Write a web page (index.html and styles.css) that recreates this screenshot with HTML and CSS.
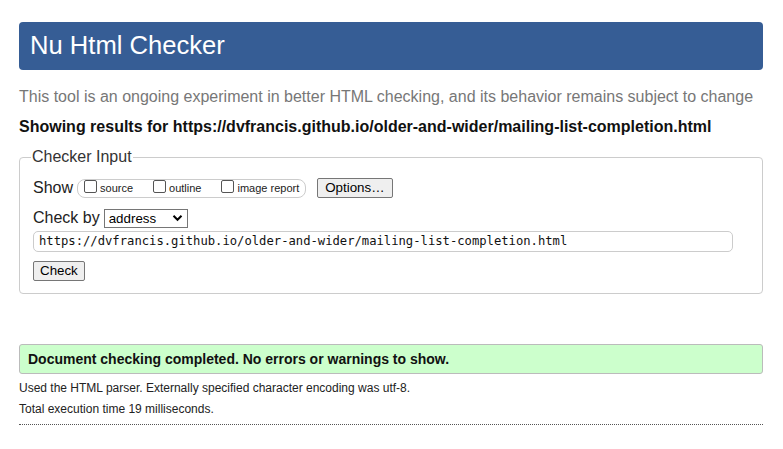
FILE: index.html
```html
<!DOCTYPE html>
<html>
<head>
<meta charset="utf-8">
<link rel="stylesheet" href="styles.css">
</head>
<body>
<h1 class="title">Nu Html Checker</h1>
<p class="intro">This tool is an ongoing experiment in better HTML checking, and its behavior remains subject to change</p>
<p class="results-for">Showing results for https://dvfrancis.github.io/older-and-wider/mailing-list-completion.html</p>
<fieldset class="input-box">
  <legend>Checker Input</legend>
  <div class="row">
    <span class="lbl">Show</span>
    <span class="opts">
      <label class="opt"><span class="cb"></span>source</label>
      <label class="opt"><span class="cb"></span>outline</label>
      <label class="opt last"><span class="cb"></span>image report</label>
    </span>
    <span class="btn options">Options…</span>
  </div>
  <div class="row row2">
    <span class="lbl">Check by</span>
    <span class="select">address<svg width="11" height="8" viewBox="0 0 11 8"><path d="M1.5 1.8 L5.5 5.8 L9.5 1.8" fill="none" stroke="#000" stroke-width="2"/></svg></span>
  </div>
  <div class="url">https://dvfrancis.github.io/older-and-wider/mailing-list-completion.html</div>
  <span class="btn check">Check</span>
</fieldset>
<div class="success">Document checking completed. No errors or warnings to show.</div>
<p class="details">Used the HTML parser. Externally specified character encoding was utf-8.</p>
<p class="details">Total execution time 19 milliseconds.</p>
<hr class="rule">
</body>
</html>
```
FILE: styles.css
```css
html, body { background: #fff; }
body {
  margin: 0;
  padding: 22px 20px 0 19px;
  font-family: "Liberation Sans", Arial, sans-serif;
  color: #000;
}
.title {
  margin: 0;
  height: 48px;
  line-height: 47px;
  padding-left: 11px;
  background: #365d95;
  color: #fff;
  font-size: 25.6px;
  font-weight: normal;
  border-radius: 4px;
}
.intro {
  margin: 18px 0 0;
  font-size: 16px;
  line-height: 18px;
  color: #777;
}
.results-for {
  margin: 12px 0 0;
  font-size: 16px;
  line-height: 18px;
  font-weight: bold;
  color: #111;
}
.input-box {
  margin: 12px 0 0;
  padding: 12px 13px 12px 13px;
  border: 1px solid #ccc;
  border-radius: 4px;
}
.input-box legend {
  padding: 0 1px;
  font-size: 16px;
  line-height: 18px;
  color: #333;
  margin-left: -2px;
}
.row {
  display: flex;
  align-items: center;
  height: 20px;
}
.row2 { margin-top: 10px; }
.lbl { font-size: 16px; color: #222; }
.opts {
  display: inline-flex;
  align-items: center;
  margin-left: 4px;
  height: 17px;
  border: 1px solid #ccc;
  border-radius: 8px;
  padding: 0 6px 0 6px;
}
.opt {
  display: inline-flex;
  align-items: center;
  font-size: 11px;
  color: #222;
  margin-right: 20px;
}
.opt.last { margin-right: 0; }
.cb {
  box-sizing: border-box;
  width: 13px;
  height: 13px;
  border: 1px solid #555;
  border-radius: 2px;
  margin-right: 3px;
  margin-top: -3px;
  background: #fff;
}
.btn {
  display: inline-block;
  box-sizing: border-box;
  border: 1px solid #767676;
  border-radius: 2px;
  background: #efefef;
  font-size: 13.33px;
  color: #000;
}
.options {
  margin-left: 11px;
  height: 20px;
  line-height: 18px;
  padding: 0 7px;
}
.select {
  display: inline-flex;
  align-items: center;
  justify-content: space-between;
  box-sizing: border-box;
  margin-left: 4px;
  width: 84px;
  height: 19px;
  border: 1px solid #767676;
  border-radius: 0;
  font-size: 13.33px;
  padding: 0 4px 0 4px;
}
.url {
  margin-top: 3px;
  box-sizing: border-box;
  width: 700px;
  height: 21px;
  line-height: 19px;
  border: 1px solid #ccc;
  border-radius: 5px;
  padding-left: 5px;
  font-family: "DejaVu Sans Mono", "Liberation Mono", monospace;
  font-size: 12.2px;
  color: #111;
}
.check {
  margin-top: 9px;
  height: 20px;
  line-height: 18px;
  padding: 0 6px;
}
.success {
  margin-top: 50px;
  box-sizing: border-box;
  height: 30px;
  line-height: 28px;
  padding-left: 8px;
  background: #ccffcc;
  border: 1px solid #bbb;
  border-radius: 3px;
  font-size: 14px;
  font-weight: bold;
  color: #111;
}
.details {
  margin: 7px 0 0;
  font-size: 12px;
  line-height: 14px;
  color: #222;
}
.details + .details { margin-top: 7px; }
.rule {
  margin: 8px 0 0;
  border: 0;
  border-top: 1px dotted #555;
}
```
